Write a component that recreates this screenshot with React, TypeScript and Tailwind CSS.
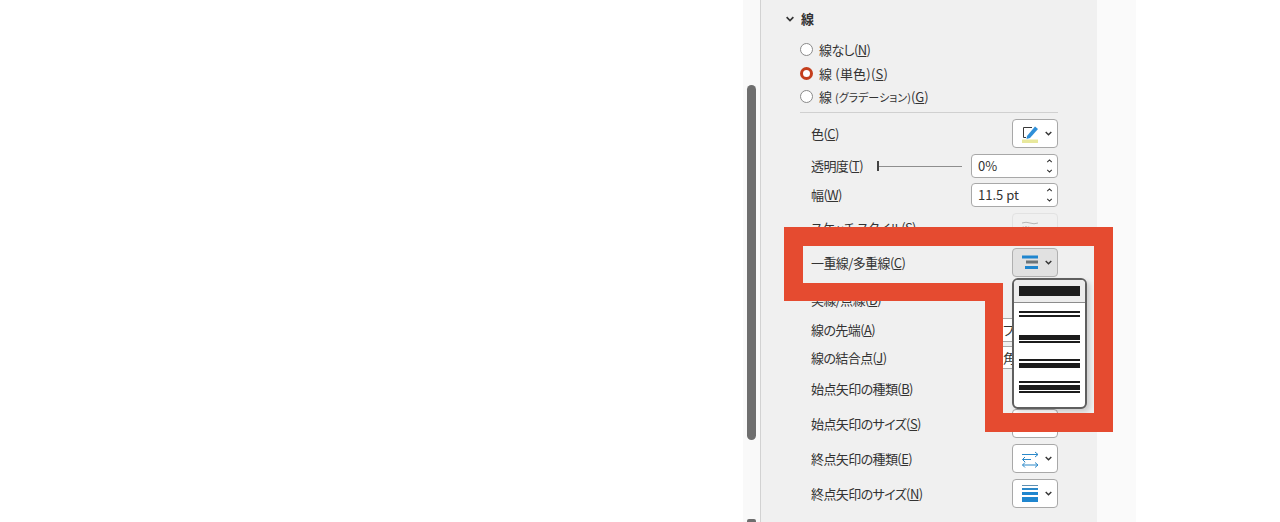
import type { ReactNode } from 'react'

const font = "font-['Meiryo_UI','Noto_Sans_CJK_JP','Noto_Sans',sans-serif] [font-feature-settings:'palt']"

function Chevron({ className = 'w-[7px] h-[5px]' }: { className?: string }) {
  return (
    <svg viewBox="0 0 7 5" className={className} fill="none" stroke="#333333" strokeWidth="1.4">
      <path d="M0.7 1 L3.5 3.8 L6.3 1" />
    </svg>
  )
}

function Label({ text, hot }: { text: string; hot: string }) {
  return (
    <span className="whitespace-nowrap tracking-[-0.6px]">
      {text}(<span className="underline">{hot}</span>)
    </span>
  )
}

function Radio({ checked, children }: { checked?: boolean; children: ReactNode }) {
  return (
    <div className="flex items-center h-[23px] pl-[39px] gap-[6px]">
      {checked ? (
        <span className="w-[13px] h-[13px] rounded-full bg-white border-[3px] border-[#c43e1c]" />
      ) : (
        <span className="w-[13px] h-[13px] rounded-full bg-white border border-[#8a8a8a]" />
      )}
      {children}
    </div>
  )
}

function DropButton({ children, active, disabled }: { children?: ReactNode; active?: boolean; disabled?: boolean }) {
  const tone = active
    ? 'bg-[#e1e1e1] border-[#b0b0b0]'
    : disabled
      ? 'bg-[#f0f0f0] border-[#e2e2e2]'
      : 'bg-white border-[#a8a8a8]'
  return (
    <div className={`w-[46px] h-full rounded-[4px] border ${tone} flex items-center pl-[9px] gap-[6px]`}>
      <span className="w-[17px] h-[20px] flex items-center justify-center">{children}</span>
      {!disabled && <Chevron />}
    </div>
  )
}

function SpinInput({ value }: { value: string }) {
  return (
    <div className="w-[87px] h-[24px] rounded-[4px] border border-[#a8a8a8] bg-white flex items-center justify-between pl-[6px] pr-[4px]">
      <span>{value}</span>
      <span className="flex flex-col gap-[6px]">
        <Chevron className="w-[7px] h-[4px] rotate-180" />
        <Chevron className="w-[7px] h-[4px]" />
      </span>
    </div>
  )
}

function SelectBox({ value }: { value: string }) {
  return (
    <div className="w-[63px] h-full rounded-[4px] border border-[#a8a8a8] bg-white flex items-center pl-[7px] overflow-hidden whitespace-nowrap">
      {value}
    </div>
  )
}

function Row({ h, children, right }: { h: string; children: ReactNode; right?: ReactNode }) {
  return (
    <div className={`flex items-center justify-between pl-[50px] pr-[39px] ${h}`}>
      {children}
      {right}
    </div>
  )
}

function PenIcon() {
  return (
    <svg viewBox="0 0 17 20" className="w-[17px] h-[20px]" fill="none">
      <path d="M10 3.5 H1.5 V13.5 H4" stroke="#3a3a3a" strokeWidth="1" />
      <path d="M5 12 L13 2.5 L16 5 L8 14 L4.5 15 Z" fill="#2f8fd8" />
      <rect x="0" y="15.5" width="16" height="3.5" fill="#e8e89c" />
    </svg>
  )
}

function CompoundIcon() {
  return (
    <svg viewBox="0 0 17 16" className="w-[17px] h-[16px]">
      <rect x="0" y="0.5" width="16" height="3" fill="#1f86cf" />
      <rect x="4" y="5.5" width="12" height="3" fill="#6d7478" />
      <rect x="3" y="11" width="13" height="3" fill="#1f86cf" />
    </svg>
  )
}

function ArrowIcon() {
  return (
    <svg viewBox="0 0 17 18" className="w-[17px] h-[18px]" fill="none" stroke="#2a88c9" strokeWidth="1">
      <path d="M0 4.5 H16 M13 2 L16 4.5 L13 7" />
      <path d="M0.5 9.5 H9 M3 7 L0.5 9.5 L3 12" />
      <path d="M0.5 15 H16 M3 12.5 L0.5 15 L3 17.5 M13 12.5 L16 15 L13 17.5" />
    </svg>
  )
}

function WeightIcon() {
  return (
    <svg viewBox="0 0 17 20" className="w-[17px] h-[20px]">
      <rect x="0" y="1" width="16" height="1" fill="#5d8fb3" />
      <rect x="0" y="4" width="16" height="2" fill="#2a88c9" />
      <rect x="0" y="8" width="16" height="3" fill="#1f86cf" />
      <rect x="0" y="13" width="16" height="5" fill="#1f86cf" />
    </svg>
  )
}

function SketchIcon() {
  return (
    <svg viewBox="0 0 17 16" className="w-[17px] h-[16px]" fill="none" stroke="#b5b5b5">
      <path d="M0 3 Q4 1.5 8 3 T16 3" />
      <path d="M0 7.5 Q4 6 8 7.5 T16 7.5" strokeDasharray="2 1" />
      <path d="M0 12 Q4 10.5 8 12 T16 12" />
    </svg>
  )
}

// dropdown of compound line styles, opened over the form
function LineMenu() {
  return (
    <div className="absolute left-[1012px] top-[278px] w-[75px] h-[131px] rounded-[6px] border-2 border-[#5f5f5f] bg-white overflow-hidden shadow-[3px_3px_5px_rgba(0,0,0,0.15)]">
      <div className="h-[23px] bg-[#ececec] border-b border-[#8c8c8c] flex items-center px-[5px]">
        <div className="w-full h-[10px] bg-[#1c1c1c]" />
      </div>
      <div className="flex flex-col px-[5px] pt-[8px]">
        <div className="h-[2px] bg-[#1c1c1c]" />
        <div className="h-[2px] mt-[2px] bg-[#1c1c1c]" />
        <div className="h-[5px] mt-[18px] bg-[#1c1c1c]" />
        <div className="h-[2px] mt-[1px] bg-[#1c1c1c]" />
        <div className="h-[2px] mt-[16px] bg-[#1c1c1c]" />
        <div className="h-[5px] mt-[2px] bg-[#1c1c1c]" />
        <div className="h-[2px] mt-[13px] bg-[#1c1c1c]" />
        <div className="h-[5px] mt-[2px] bg-[#1c1c1c]" />
        <div className="h-[2px] mt-[1px] bg-[#1c1c1c]" />
      </div>
    </div>
  )
}

export default function App() {
  return (
    <div className={`relative flex w-[1280px] h-[522px] overflow-hidden bg-white text-[13px] text-[#333333] ${font}`}>
      <div className="w-[743px]" />
      <div className="w-[18px] bg-[#f9f9f9] border-r border-[#d2d2d2] pt-[85px] pl-[4px]">
        <div className="w-[9px] h-[355px] rounded-[5px] bg-[#6e6e6e]" />
        <div className="w-[9px] h-[6px] mt-[79px] rounded-t-[2px] bg-[#6e6e6e]" />
      </div>

      <div className="w-[336px] bg-[#f0f0f0] pt-[7px]">
        <div className="flex items-center h-[23px] pl-[24px] gap-[6px] font-bold">
          <Chevron className="w-[10px] h-[6px]" />
          <span>線</span>
        </div>
        <div className="h-[8px]" />
        <Radio><Label text="線なし" hot="N" /></Radio>
        <div className="h-px" />
        <Radio checked><span className="whitespace-nowrap tracking-[0.2px]">線 (単色)(<span className="underline">S</span>)</span></Radio>
        <Radio><span className="whitespace-nowrap">線 <span className="text-[11px]">(グラデーション)</span>(<span className="underline">G</span>)</span></Radio>
        <div className="ml-[39px] mr-[39px] mt-[4px] mb-[6px] border-t border-[#d0d0d0]" />

        <Row h="h-[29px]" right={<DropButton><PenIcon /></DropButton>}><Label text="色" hot="C" /></Row>
        <div className="h-[6px]" />
        <Row h="h-[24px]" right={<SpinInput value="0%" />}>
          <span className="w-[66px]"><Label text="透明度" hot="T" /></span>
          <span className="flex items-center w-[85px] mr-[9px]">
            <span className="w-[2px] h-[10px] bg-[#444444]" />
            <span className="flex-1 h-px bg-[#8e8e8e]" />
          </span>
        </Row>
        <div className="h-[5px]" />
        <Row h="h-[24px]" right={<SpinInput value="11.5 pt" />}><Label text="幅" hot="W" /></Row>
        <div className="h-[6px]" />
        <Row h="h-[30px]" right={<DropButton disabled><SketchIcon /></DropButton>}><Label text="スケッチ スタイル" hot="S" /></Row>
        <div className="h-[5px]" />
        <Row h="h-[29px]" right={<DropButton active><CompoundIcon /></DropButton>}><Label text="一重線/多重線" hot="C" /></Row>
        <div className="h-[8px]" />
        <Row h="h-[30px]" right={<DropButton />}><Label text="実線/点線" hot="D" /></Row>
        <div className="h-[3px]" />
        <Row h="h-[24px]" right={<SelectBox value="フラット" />}><Label text="線の先端" hot="A" /></Row>
        <div className="h-[4px]" />
        <Row h="h-[23px]" right={<SelectBox value="角" />}><Label text="線の結合点" hot="J" /></Row>
        <div className="h-[5px]" />
        <Row h="h-[30px]" right={<DropButton />}><Label text="始点矢印の種類" hot="B" /></Row>
        <div className="h-[5px]" />
        <Row h="h-[29px]" right={<DropButton />}><Label text="始点矢印のサイズ" hot="S" /></Row>
        <div className="h-[6px]" />
        <Row h="h-[29px]" right={<DropButton><ArrowIcon /></DropButton>}><Label text="終点矢印の種類" hot="E" /></Row>
        <div className="h-[6px]" />
        <Row h="h-[29px]" right={<DropButton><WeightIcon /></DropButton>}><Label text="終点矢印のサイズ" hot="N" /></Row>
      </div>

      <div className="w-[39px] bg-[#fafafa]" />

      <LineMenu />

      {/* red callout drawn over the panel */}
      <svg className="absolute left-0 top-0 w-[1280px] h-[522px] pointer-events-none" viewBox="0 0 1280 522">
        <path
          fillRule="evenodd"
          fill="#e54b30"
          d="M784 227 H1113 V432 H985 V301 H784 Z M803 246 V283 H1003 V413 H1094 V246 Z"
        />
      </svg>
    </div>
  )
}
